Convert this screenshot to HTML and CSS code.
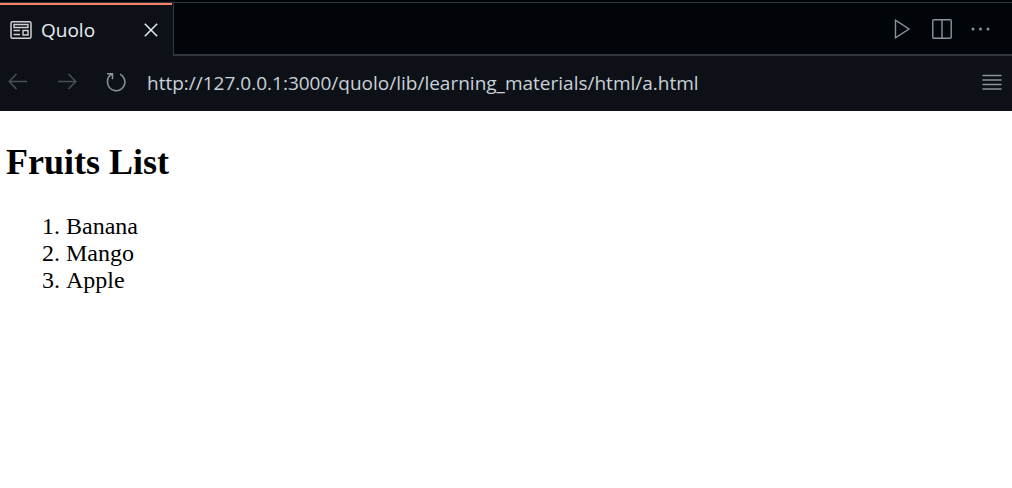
FILE: index.html
```html
<!DOCTYPE html>
<html lang="en">
<head>
<meta charset="utf-8">
<title>Quolo</title>
<link rel="stylesheet" href="styles.css">
</head>
<body>
<header class="tabbar">
  <div class="tab">
    <svg class="tab-icon" width="22" height="18" viewBox="0 0 22 18" fill="none" stroke="currentColor"><rect x="1" y="0.75" width="20" height="16.5" rx="1.5" stroke-width="1.5"/><path d="M4 3.5h14v3H4zM13 9.5h5v4.500h-5z" stroke-width="1.4"/><path d="M3.500 9.500h6.500M3.500 13.500h6.500" stroke-width="1.4"/></svg>
    <span class="tab-title">Quolo</span>
    <button class="icon-button close" aria-label="Close tab"><svg width="14" height="14" viewBox="0 0 14 14" fill="none" stroke="currentColor" stroke-width="1.5"><path d="M.8.8l12.400 12.400M13.200.8L.8 13.200"/></svg></button>
  </div>
  <div class="actions">
    <button class="icon-button" aria-label="Run"><svg width="19" height="20" viewBox="0 0 19 20" fill="none" stroke="currentColor" stroke-width="1.4"><path d="M1.500 1.200v17.600L15 10z"/></svg></button>
    <button class="icon-button" aria-label="Split editor"><svg width="20" height="20" viewBox="0 0 20 20" fill="none" stroke="currentColor" stroke-width="1.4"><rect x=".8" y=".8" width="18.400" height="18.400" rx="1"/><path d="M10 1v18"/></svg></button>
    <button class="icon-button" aria-label="More actions"><svg width="20" height="20" viewBox="0 0 20 20" fill="currentColor"><circle cx="2" cy="10" r="1.500"/><circle cx="9.500" cy="10" r="1.500"/><circle cx="17" cy="10" r="1.500"/></svg></button>
  </div>
</header>
<nav class="toolbar">
  <button class="icon-button dim" aria-label="Back"><svg width="20" height="18" viewBox="0 0 20 18" fill="none" stroke="currentColor" stroke-width="1.5"><path d="M19 8.500H1.500M8.500 1L1.200 8.500L8.500 16"/></svg></button>
  <button class="icon-button dim" aria-label="Forward"><svg width="20" height="18" viewBox="0 0 20 18" fill="none" stroke="currentColor" stroke-width="1.5"><path d="M1 8.500h17.500M11.500 1L18.800 8.500L11.500 16"/></svg></button>
  <button class="icon-button" aria-label="Reload"><svg width="20" height="20" viewBox="0 0 20 20" fill="none" stroke="currentColor" stroke-width="1.500"><path d="M1 1.700h5.500v5.500M6.500 1.700C3 3.200 1.500 6 1.500 9.500A8.700 8.700 0 1 0 14 2.200"/></svg></button>
  <input class="address" type="text" aria-label="Address" value="http://127.0.0.1:3000/quolo/lib/learning_materials/html/a.html">
  <button class="icon-button" aria-label="Menu"><svg width="20" height="18" viewBox="0 0 20 18" fill="none" stroke="currentColor" stroke-width="1.5"><path d="M.5 2.500h19M.5 7h19M.5 11.500h19M.5 16h19"/></svg></button>
</nav>
<main class="page">
  <h2 class="heading">Fruits List</h2>
  <ol class="fruits">
    <li>Banana</li>
    <li>Mango</li>
    <li>Apple</li>
  </ol>
</main>
</body>
</html>
```
FILE: styles.css
```css
* { box-sizing: border-box; }
body { margin: 0; background: #fff; font-family: "Open Sans", sans-serif; }
.tabbar {
  display: flex;
  justify-content: space-between;
  height: 56px;
  padding-top: 2px;
  background: linear-gradient(#30363d, #30363d) 0 2px / 100% 1px no-repeat, #010409;
  box-shadow: inset 0 -2px #30363d;
}
.tab {
  display: flex;
  align-items: center;
  width: 174px;
  margin-top: 1px;
  padding: 0 15px 0 10px;
  border-right: 1px solid #30363d;
  background: linear-gradient(#f78166, #f78166) 0 0 / 172px 2px no-repeat, #0d1117;
  color: #e6edf3;
}
.tab-icon { color: #d0d3d6; }
.tab-title { margin-left: 9px; font-size: 19px; line-height: 28px; }
.icon-button {
  display: flex;
  padding: 0;
  border: 0;
  background: none;
  color: #8b949e;
}
.close { margin-left: auto; color: #e6edf3; }
.actions { display: flex; align-items: center; gap: 19px; padding-right: 21px; }
.toolbar {
  display: flex;
  align-items: center;
  gap: 29px;
  height: 55px;
  padding: 0 10px 4px 8px;
  background: #0d1117;
}
.dim { color: #484f58; }
.address {
  flex: 1;
  min-width: 0;
  height: 32px;
  margin-left: -8px;
  padding: 2px 0 0;
  border: 0;
  outline: 0;
  background: none;
  color: #c9d1d9;
  font: 19px/28px "Open Sans", sans-serif;
}
.page {
  padding: 31px 6px;
  color: #000;
  font: 24px/27px "Liberation Serif", serif;
}
.heading { margin: 0 0 30px; font-size: 36px; line-height: 41px; }
.fruits { margin: 0; padding-left: 60px; }
```
